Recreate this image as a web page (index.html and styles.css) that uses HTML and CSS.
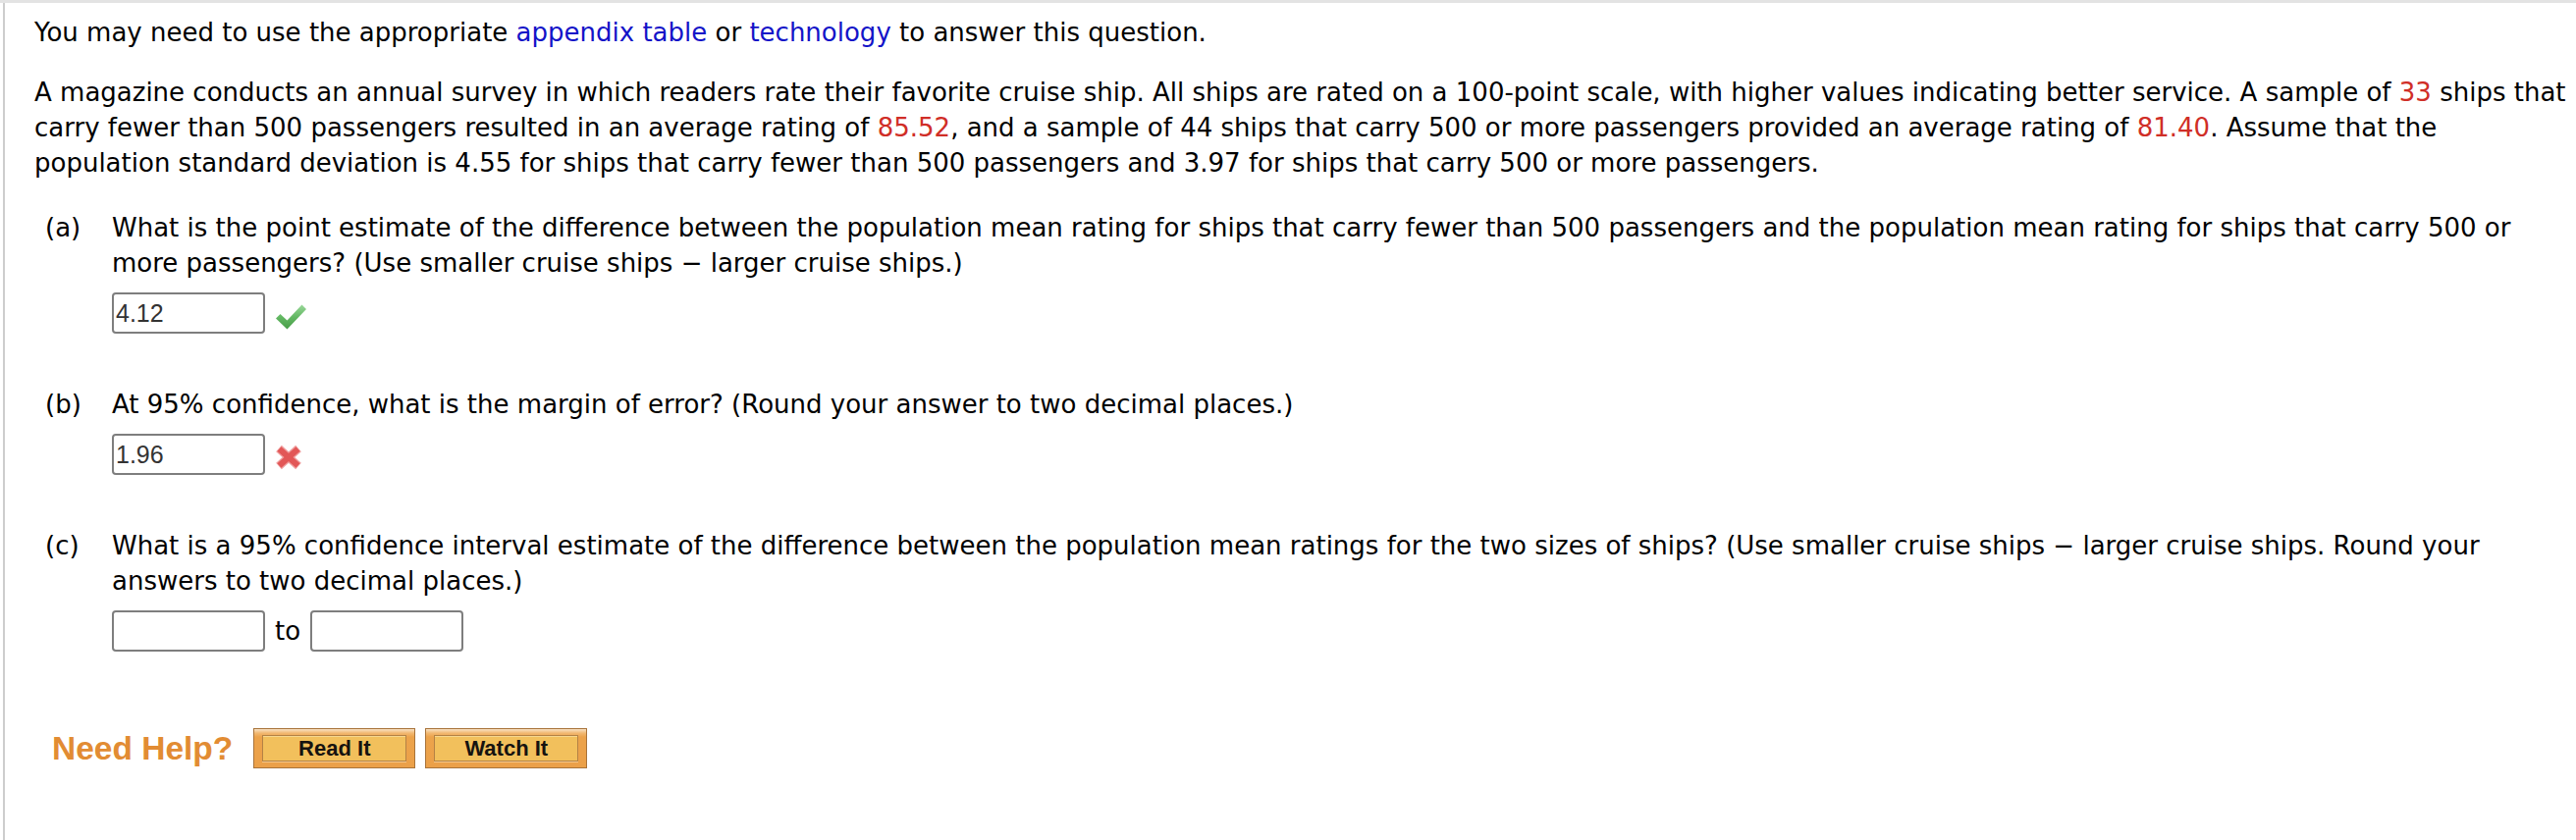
FILE: index.html
```html
<!DOCTYPE html>
<html lang="en">
<head>
<meta charset="utf-8">
<title>Cruise ship ratings</title>
<link rel="stylesheet" href="styles.css">
</head>
<body>
<main class="panel">
  <p class="note">You may need to use the appropriate <a class="link" href="#">appendix table</a> or <a class="link" href="#">technology</a> to answer this question.</p>
  <p class="stem">A magazine conducts an annual survey in which readers rate their favorite cruise ship. All ships are rated on a 100-point scale, with higher values indicating better service. A sample of <span class="val">33</span> ships that carry fewer than 500 passengers resulted in an average rating of <span class="val">85.52</span>, and a sample of 44 ships that carry 500 or more passengers provided an average rating of <span class="val">81.40</span>. Assume that the population standard deviation is 4.55 for ships that carry fewer than 500 passengers and 3.97 for ships that carry 500 or more passengers.</p>
  <ol class="parts">
    <li class="part">
      <span class="label">(a)</span>
      <div class="part-body">
        <p class="q">What is the point estimate of the difference between the population mean rating for ships that carry fewer than 500 passengers and the population mean rating for ships that carry 500 or more passengers? (Use smaller cruise ships &minus; larger cruise ships.)</p>
        <div class="answer">
          <input class="field" type="text" value="4.12" readonly>
          <svg class="mark" width="31" height="26" viewBox="0 0 31 26" aria-label="correct">
            <defs>
              <linearGradient id="gk" x1="0" y1="0" x2="0" y2="1">
                <stop offset="0" stop-color="#9ad89a"/>
                <stop offset="0.5" stop-color="#63b863"/>
                <stop offset="1" stop-color="#479d47"/>
              </linearGradient>
            </defs>
            <polygon points="0,14.5 4.5,10 11.5,16.5 26.5,0.5 31,5 11.5,25.5" fill="url(#gk)"/>
          </svg>
        </div>
      </div>
    </li>
    <li class="part">
      <span class="label">(b)</span>
      <div class="part-body">
        <p class="q">At 95% confidence, what is the margin of error? (Round your answer to two decimal places.)</p>
        <div class="answer">
          <input class="field" type="text" value="1.96" readonly>
          <svg class="mark mark-x" width="28" height="26" viewBox="0 0 28 26" aria-label="incorrect">
            <g stroke="#f0a0a0" stroke-width="8.5">
              <line x1="4" y1="4" x2="24" y2="22"/>
              <line x1="24" y1="4" x2="4" y2="22"/>
            </g>
            <g stroke="#e25757" stroke-width="6">
              <line x1="4.5" y1="4.5" x2="23.5" y2="21.5"/>
              <line x1="23.5" y1="4.5" x2="4.5" y2="21.5"/>
            </g>
          </svg>
        </div>
      </div>
    </li>
    <li class="part">
      <span class="label">(c)</span>
      <div class="part-body">
        <p class="q">What is a 95% confidence interval estimate of the difference between the population mean ratings for the two sizes of ships? (Use smaller cruise ships &minus; larger cruise ships. Round your answers to two decimal places.)</p>
        <div class="answer">
          <input class="field" type="text" value="">
          <span class="to">to</span>
          <input class="field" type="text" value="">
        </div>
      </div>
    </li>
  </ol>
  <div class="help">
    <span class="help-title">Need Help?</span>
    <button class="help-btn" type="button"><span class="help-face">Read It</span></button>
    <button class="help-btn" type="button"><span class="help-face">Watch It</span></button>
  </div>
</main>
</body>
</html>
```
FILE: styles.css
```css
html, body {
  margin: 0;
  padding: 0;
  background: #ffffff;
}

body {
  border-top: 3px solid #e3e3e3;
  font-family: "DejaVu Sans", Verdana, sans-serif;
  font-size: 26px;
  line-height: 36px;
  color: #000000;
  overflow: hidden;
}

.panel {
  margin-left: 3px;
  border-left: 2px solid #cdcdcd;
  padding: 12px 0 0 30px;
  box-sizing: border-box;
  min-height: calc(100vh - 3px);
}

.note {
  margin: 0 0 25px;
}

.stem {
  margin: 0;
}

.link {
  color: #1414c8;
  text-decoration: none;
}

.val {
  color: #d02e27;
}

.parts {
  list-style: none;
  margin: 30px 0 0;
  padding: 0 0 0 11px;
  display: flex;
  flex-direction: column;
  gap: 54px;
}

.part {
  display: grid;
  grid-template-columns: 68px 1fr;
}

.q {
  margin: 0;
}

.answer {
  display: flex;
  align-items: flex-end;
  gap: 10px;
  margin-top: 12px;
}

.field {
  width: 156px;
  height: 42px;
  box-sizing: border-box;
  margin: 0;
  border: 2px solid #7e7e7e;
  border-radius: 4px;
  padding: 0 2px;
  font-family: "Liberation Sans", Arial, sans-serif;
  font-size: 25px;
  color: #333333;
  background: #ffffff;
  outline: none;
}

.mark {
  display: block;
  margin-left: 1px;
  margin-bottom: 4px;
}

.mark-x {
  margin-left: 0;
  margin-bottom: 5px;
}

.to {
  align-self: center;
}

.help {
  display: flex;
  align-items: center;
  margin-top: 78px;
  padding-left: 18px;
}

.help-title {
  font-family: "Liberation Sans", Arial, sans-serif;
  font-weight: bold;
  font-size: 33.5px;
  line-height: 40px;
  color: #e28c33;
  margin-right: 21px;
}

.help-btn {
  width: 165px;
  height: 41px;
  box-sizing: border-box;
  margin: 0 10px 0 0;
  padding: 6px 8px 6px 8px;
  border: 1px solid #a8733a;
  background: linear-gradient(to bottom, #f8e1c4 0, #f2b972 4px, #eca34b 8px, #eba049 100%);
  cursor: pointer;
}

.help-face {
  display: flex;
  align-items: center;
  justify-content: center;
  height: 100%;
  box-sizing: border-box;
  border: 1px solid #b48245;
  box-shadow: inset 0 1px 0 #f7d78f, 0 1px 0 #f4c88c;
  background: #f2c05c;
  font-family: "Liberation Sans", Arial, sans-serif;
  font-weight: bold;
  font-size: 22px;
  color: #161310;
}
```
